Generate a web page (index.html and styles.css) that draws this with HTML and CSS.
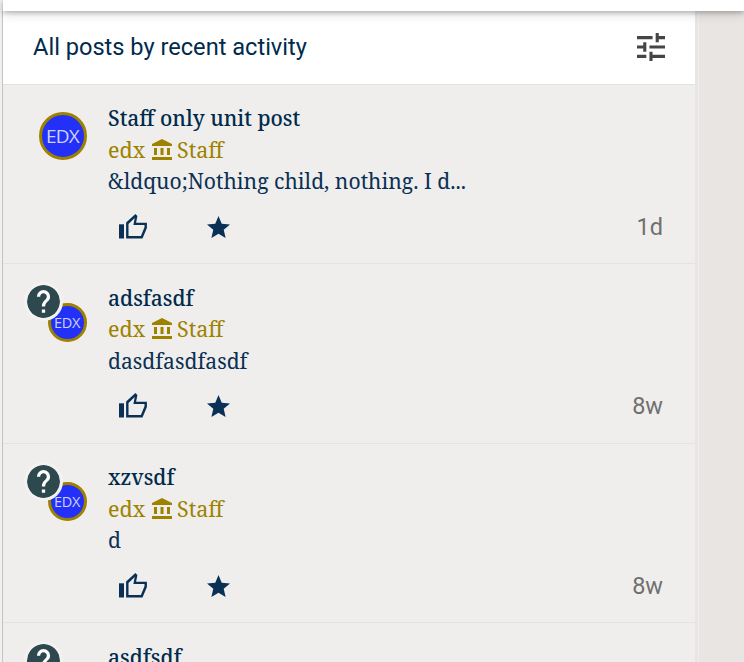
FILE: index.html
```html
<!DOCTYPE html>
<html lang="en">
<head>
<meta charset="utf-8">
<title>Discussions</title>
<link rel="stylesheet" href="styles.css">
</head>
<body>
<svg class="defs" aria-hidden="true">
  <symbol id="staff" viewBox="2 1 20 21"><path d="M4 10h3v7H4zM10.5 10h3v7h-3zM2 19h20v3H2zM17 10h3v7h-3zM12 1L2 6v2h20V6z"/></symbol>
  <symbol id="like" viewBox="0 0 28 25"><path d="M0 10.3h5v14.2H0z"/><path fill-rule="evenodd" d="M7.1 8.6 16.4 0l2 1.9-1.3 6.8h10.8v5.2L23.5 24.5H7.1zM9.5 10v12.1h12.4l3.6-8.8v-2.2H14.4l1.3-7.1z"/></symbol>
  <symbol id="star" viewBox="2 2 20 19"><path d="M12 17.27 18.18 21l-1.64-7.03L22 9.24l-7.19-.61L12 2 9.19 8.63 2 9.24l5.46 4.73L5.82 21z"/></symbol>
  <symbol id="question" viewBox="2 2 20 20"><circle cx="12" cy="12" r="10"/><path class="mark" d="M11 17h2v2h-2zM11 15.25h2c0-3.25 3-3 3-6a4 4 0 0 0-8 0h2c0-1.1.9-2 2-2s2 .9 2 2c0 2-3 2.25-3 6z" transform="translate(0 -.2)"/></symbol>
</svg>
<div class="topbar"></div>
<div class="page">
  <main class="panel">
    <header class="filter">
      <span>All posts by recent activity</span>
      <svg class="tune" viewBox="3 3 18 18"><path d="M3 17v2h6v-2zM3 5v2h10V5zm10 16v-2h8v-2h-8v-2h-2v6zM7 9v2H3v2h4v2h2V9zm14 4v-2H11v2zm-6-4h2V7h4V5h-4V3h-2z"/></svg>
    </header>
    <article class="post">
      <div class="avatar-col"><div class="avatar">EDX</div></div>
      <div class="content">
        <h2>Staff only unit post</h2>
        <div class="author"><span>edx</span><svg><use href="#staff"/></svg><span>Staff</span></div>
        <p>&amp;ldquo;Nothing child, nothing. I d...</p>
        <footer><svg class="like"><use href="#like"/></svg><svg class="star"><use href="#star"/></svg><time>1d</time></footer>
      </div>
    </article>
    <article class="post">
      <div class="avatar-col"><div class="avatar small">EDX</div><svg class="question"><use href="#question"/></svg></div>
      <div class="content">
        <h2>adsfasdf</h2>
        <div class="author"><span>edx</span><svg><use href="#staff"/></svg><span>Staff</span></div>
        <p>dasdfasdfasdf</p>
        <footer><svg class="like"><use href="#like"/></svg><svg class="star"><use href="#star"/></svg><time>8w</time></footer>
      </div>
    </article>
    <article class="post">
      <div class="avatar-col"><div class="avatar small">EDX</div><svg class="question"><use href="#question"/></svg></div>
      <div class="content">
        <h2>xzvsdf</h2>
        <div class="author"><span>edx</span><svg><use href="#staff"/></svg><span>Staff</span></div>
        <p>d</p>
        <footer><svg class="like"><use href="#like"/></svg><svg class="star"><use href="#star"/></svg><time>8w</time></footer>
      </div>
    </article>
    <article class="post last">
      <div class="avatar-col"><svg class="question"><use href="#question"/></svg></div>
      <div class="content">
        <h2>asdfsdf</h2>
      </div>
    </article>
  </main>
  <div class="scroll-edge"></div>
</div>
</body>
</html>
```
FILE: styles.css
```css
* { box-sizing: border-box; }
body {
  margin: 0;
  height: 662px;
  overflow: hidden;
  display: flex;
  flex-direction: column;
  background: #e9e5e2;
  color: #0a3055;
}
.defs { position: absolute; width: 0; height: 0; }
.topbar {
  flex: none;
  height: 11px;
  margin-left: 3px;
  background: #fff;
  box-shadow: 0 2px 4px rgba(0,0,0,.22), 0 3px 12px rgba(0,0,0,.14);
  position: relative;
  z-index: 2;
}
.page {
  display: flex;
  width: 699px;
  height: 662px;
  margin-top: -11px;
  padding-top: 11px;
  border-left: 2px solid #f1f0ee;
  flex: none;
  overflow: hidden;
}
.panel { flex: 1; border-left: 1px solid #c7c3bc; background: #efeeec; overflow: hidden; }
.scroll-edge {
  width: 4px;
  background: #e7e6e5;
  border-right: 1px solid #efeeec;
}
.filter {
  height: 73.5px;
  padding: 0 30px;
  display: flex;
  align-items: center;
  justify-content: space-between;
  background: #fff;
  border-bottom: 1px solid #e4e1df;
  font: 23.6px/30px Roboto, sans-serif;
  color: #002b4c;
}
.filter span { margin-bottom: 1.5px; }
.tune { width: 28px; height: 28px; margin-bottom: 1px; fill: #454545; }
.post {
  height: 179.5px;
  display: flex;
  padding: 17.5px 32px 0 24px;
  border-bottom: 1px solid #e4e3e1;
}
.post.last { height: 39px; border: 0; overflow: hidden; }
.avatar-col { width: 81px; flex: none; position: relative; padding: 10px 0 0 12px; }
.avatar {
  width: 48px;
  height: 48px;
  border: 3px solid #9d8200;
  border-radius: 50%;
  background: #2331f8;
  color: #ccd2fa;
  font: 500 19px/42px "Open Sans", sans-serif;
  letter-spacing: -.8px;
  text-indent: -1px;
  display: flex;
  justify-content: center;
}
.avatar.small { width: 39px; height: 39px; margin: 11px 0 0 9px; font-size: 14.5px; line-height: 33px; letter-spacing: -.4px; }
.question {
  position: absolute;
  left: -3px;
  top: .5px;
  width: 39px;
  height: 39px;
  padding: 3px;
  border-radius: 50%;
  background: #f3f2f0;
  fill: #2d494e;
}
.mark { fill: #fff; }
.content { flex: 1; font: 22.5px/31.5px "Noto Serif", "Droid Serif", "Liberation Serif", serif; }
h2, p { margin: 0; font: inherit; white-space: nowrap; }
h2, p, .author span { transform: scaleX(.938); transform-origin: 0 50%; }
h2 { color: #002b4c; font-weight: 500; transform: scaleX(.933); }
.author { display: flex; align-items: center; height: 31.5px; color: #9d8200; }
.author span { transform: scaleX(.955); }
.author svg { width: 20px; height: 21px; margin: 0 5px 0 5.5px; fill: #9d8200; }
footer { display: flex; align-items: center; height: 59px; padding-left: 10.5px; fill: #0a3055; }
.like { width: 28px; height: 25px; }
.star { width: 23px; height: 22px; margin: 1px 0 0 60.5px; }
time { margin: 1.5px 0 0 auto; font: 23.5px/30px Roboto, sans-serif; color: #707070; }
```
